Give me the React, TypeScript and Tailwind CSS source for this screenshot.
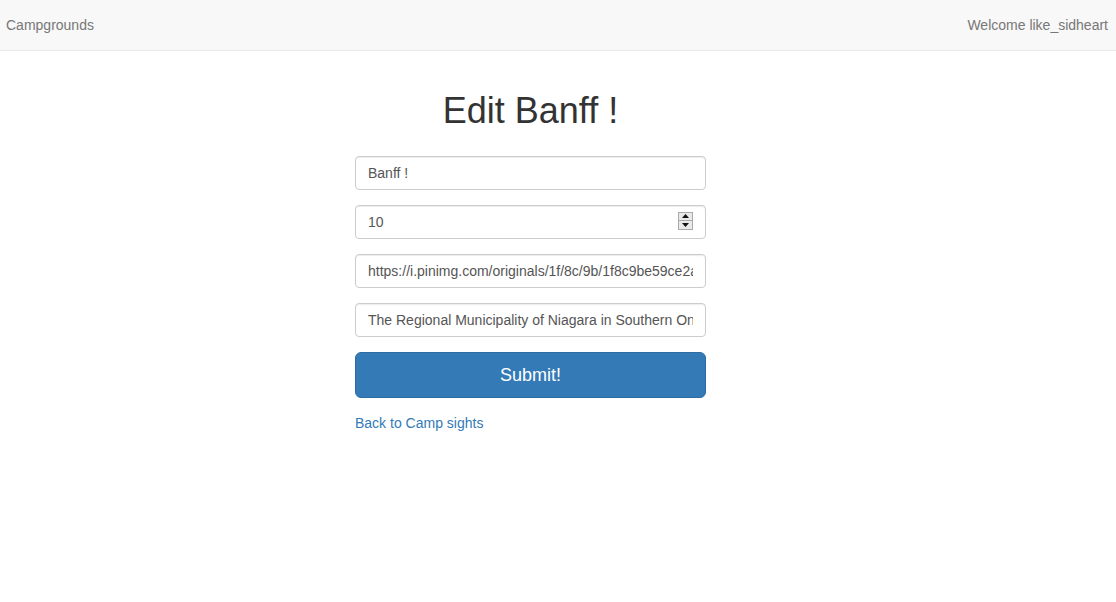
import React from "react";

const inputClass =
  "block w-full h-[34px] px-[12px] py-[6px] text-[14px] leading-[20px] text-[#555] bg-white border border-[#ccc] rounded-[4px] shadow-[inset_0_1px_1px_rgba(0,0,0,0.075)] outline-none";

function Spinner() {
  return (
    <div className="absolute right-[13px] top-[7px] flex h-[18px] w-[15px] flex-col border border-[#a9a9a9] bg-[#e9e9e9]">
      <div className="flex flex-1 items-center justify-center border-b border-[#a9a9a9]">
        <svg width="7" height="4" viewBox="0 0 7 4">
          <path d="M0 4 L3.5 0 L7 4 Z" fill="#111" />
        </svg>
      </div>
      <div className="flex flex-1 items-center justify-center">
        <svg width="7" height="4" viewBox="0 0 7 4">
          <path d="M0 0 L3.5 4 L7 0 Z" fill="#111" />
        </svg>
      </div>
    </div>
  );
}

export default function App() {
  return (
    <div className="min-h-[602px] bg-white font-['Liberation_Sans',Arial,sans-serif] text-[14px] text-[#333]">
      <nav className="flex h-[51px] items-center justify-between border-b border-[#e7e7e7] bg-[#f8f8f8] pl-[6px] pr-[8px]">
        <a href="/" className="text-[14px] text-[#777] no-underline">
          Campgrounds
        </a>
        <a href="#" className="text-[14px] text-[#777] no-underline">
          Welcome like_sidheart
        </a>
      </nav>

      <main className="flex justify-center pr-[55px]">
        <div className="w-[351px]">
          <h1 className="mt-[40px] mb-[25px] text-center text-[36px] leading-[39.6px] font-normal text-[#333]">
            Edit Banff !
          </h1>
          <form className="flex flex-col gap-[15px]" onSubmit={(e) => e.preventDefault()}>
            <input className={inputClass} type="text" defaultValue="Banff !" />
            <div className="relative">
              <input className={inputClass} type="text" defaultValue="10" readOnly />
              <Spinner />
            </div>
            <input
              className={inputClass}
              type="text"
              defaultValue="https://i.pinimg.com/originals/1f/8c/9b/1f8c9be59ce2a1b7e0e6e1c0d5f1a3b2.jpg"
            />
            <input
              className={inputClass}
              type="text"
              defaultValue="The Regional Municipality of Niagara in Southern Ontario, Canada"
            />
            <button
              type="submit"
              className="block h-[46px] w-full rounded-[6px] border border-[#2e6da4] bg-[#337ab7] text-[18px] leading-[24px] text-white"
            >
              Submit!
            </button>
          </form>
          <a href="/campgrounds" className="mt-[15px] block leading-[20px] text-[#337ab7] no-underline">
            Back to Camp sights
          </a>
        </div>
      </main>
    </div>
  );
}
